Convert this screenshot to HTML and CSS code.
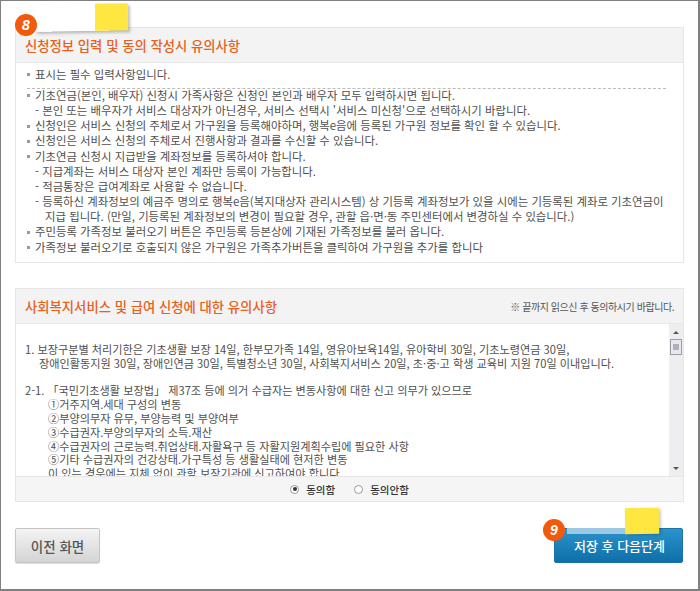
FILE: index.html
```html
<!DOCTYPE html>
<html lang="ko">
<head>
<meta charset="utf-8">
<title>유의사항</title>
<link rel="stylesheet" href="styles.css">
</head>
<body>
<div class="frame">
  <div class="tape tape-top"></div>
  <div class="badge badge-8">8</div>
  <section class="panel panel-first">
    <header class="panel-head"><h2>신청정보 입력 및 동의 작성시 유의사항</h2></header>
    <div class="notice">
      <p class="req">표시는 필수 입력사항입니다.</p>
      <ul class="list">
        <li>기초연금(본인, 배우자) 신청시 가족사항은 신청인 본인과 배우자 모두 입력하시면 됩니다.</li>
        <li class="sub">- 본인 또는 배우자가 서비스 대상자가 아닌경우, 서비스 선택시 '서비스 미신청'으로 선택하시기 바랍니다.</li>
        <li>신청인은 서비스 신청의 주체로서 가구원을 등록해야하며, 행복e음에 등록된 가구원 정보를 확인 할 수 있습니다.</li>
        <li>신청인은 서비스 신청의 주체로서 진행사항과 결과를 수신할 수 있습니다.</li>
        <li>기초연금 신청시 지급받을 계좌정보를 등록하셔야 합니다.</li>
        <li class="sub">- 지급계좌는 서비스 대상자 본인 계좌만 등록이 가능합니다.</li>
        <li class="sub">- 적금통장은 급여계좌로 사용할 수 없습니다.</li>
        <li class="sub wrap">- 등록하신 계좌정보의 예금주 명의로 행복e음(복지대상자 관리시스템) 상 기등록 계좌정보가 있을 시에는 기등록된 계좌로 기초연금이<br>지급 됩니다. (만일, 기등록된 계좌정보의 변경이 필요할 경우, 관할 읍·면·동 주민센터에서 변경하실 수 있습니다.)</li>
        <li>주민등록 가족정보 불러오기 버튼은 주민등록 등본상에 기재된 가족정보를 불러 옵니다.</li>
        <li>가족정보 불러오기로 호출되지 않은 가구원은 가족추가버튼을 클릭하여 가구원을 추가를 합니다</li>
      </ul>
    </div>
  </section>

  <section class="panel panel-second">
    <header class="panel-head split">
      <h2>사회복지서비스 및 급여 신청에 대한 유의사항</h2>
      <span class="hint">※ 끝까지 읽으신 후 동의하시기 바랍니다.</span>
    </header>
    <div class="scrollbox">
      <div class="terms">
        <p class="term">1. 보장구분별 처리기한은 기초생활 보장 14일, 한부모가족 14일, 영유아보육14일, 유아학비 30일, 기초노령연금 30일,<br><span class="cont">장애인활동지원 30일, 장애인연금 30일, 특별청소년 30일, 사회복지서비스 20일, 초·중·고 학생 교육비 지원 70일 이내입니다.</span></p>
        <p class="term">2-1. 「국민기초생활 보장법」 제37조 등에 의거 수급자는 변동사항에 대한 신고 의무가 있으므로</p>
        <ul class="circled">
          <li>①거주지역.세대 구성의 변동</li>
          <li>②부양의무자 유무, 부양능력 및 부양여부</li>
          <li>③수급권자.부양의무자의 소득.재산</li>
          <li>④수급권자의 근로능력.취업상태.자활욕구 등 자활지원계획수립에 필요한 사항</li>
          <li>⑤기타 수급권자의 건강상태.가구특성 등 생활실태에 현저한 변동</li>
          <li>이 있는 경우에는 지체 없이 관할 보장기관에 신고하여야 합니다.</li>
        </ul>
      </div>
      <div class="scrollbar">
        <svg class="arrow" viewBox="0 0 14 15" width="14" height="15"><path d="M7 7 L10 10 H4 Z" fill="#555"/></svg>
        <div class="thumb"><svg viewBox="0 0 8 7" width="8" height="7"><path d="M1 1H7M1 3H7M1 5H7" stroke="#778" stroke-width="1" fill="none"/></svg></div>
        <div class="track"></div>
        <svg class="arrow" viewBox="0 0 14 15" width="14" height="15"><path d="M4 6 H10 L7 9 Z" fill="#555"/></svg>
      </div>
    </div>
    <div class="consent">
      <label class="opt"><span class="radio on"></span>동의함</label>
      <label class="opt"><span class="radio"></span>동의안함</label>
    </div>
  </section>

  <div class="actions">
    <button class="btn btn-prev" type="button">이전 화면</button>
    <div class="next-wrap">
      <div class="strip"></div>
      <div class="tape tape-btn"></div>
      <div class="badge badge-9">9</div>
      <button class="btn btn-next" type="button">저장 후 다음단계</button>
    </div>
  </div>
</div>
</body>
</html>
```
FILE: styles.css
```css
* { box-sizing: border-box; }
html, body { margin: 0; padding: 0; }
body {
  width: 700px;
  height: 591px;
  overflow: hidden;
  background: #fff;
  font-family: "Noto Sans CJK KR", "Noto Sans", sans-serif;
  color: #4f4f4f;
}
.frame {
  position: relative;
  width: 700px;
  height: 591px;
  border: 1px solid #808080;
  border-width: 1px 2px 2px 1px;
  padding: 26px 14px 0 14px;
}
.panel {
  border: 1px solid #e6e6e6;
  width: 669px;
}
.panel-first { height: 236px; }
.panel-second { height: 214px; margin-top: 25px; display: flex; flex-direction: column; }
.panel-head {
  height: 35px;
  flex: none;
  background: #f3f3f3;
  border-bottom: 1px solid #e8e8e8;
  padding: 0 9px;
  display: flex;
  align-items: center;
}
.panel-head.split { justify-content: space-between; }
.panel-head h2 {
  margin: 0;
  font-size: 13.35px;
  font-weight: 500;
  color: #e8601c;
}
.hint { font-size: 10px; color: #555; letter-spacing: -0.45px; }
.notice { padding: 4px 0 0 11px; font-size: 11.4px; }
.notice p { margin: 0; }
.req {
  height: 22px;
  width: 639px;
  line-height: 15px;
  border-bottom: 1px dashed #bbb;
}
.req::before, .list > li:not(.sub)::before {
  content: "";
  display: inline-block;
  width: 3px;
  height: 3px;
  background: #999;
  margin: 0 5px 2px 0;
  vertical-align: middle;
}
.list {
  list-style: none;
  margin: -1px 0 0;
  padding: 0;
  line-height: 15.15px;
  white-space: nowrap;
}
.list .sub { padding-left: 8px; }
.list .wrap { padding-left: 18px; text-indent: -10px; }
.scrollbox { height: 152px; flex: none; display: flex; overflow: hidden; }
.terms {
  flex: 1;
  padding: 19px 0 0 9px;
  font-size: 11.15px;
  line-height: 13.8px;
  white-space: nowrap;
  overflow: hidden;
}
.term { margin: 0 0 13.8px; }
.cont { padding-left: 14px; }
.circled { list-style: none; margin: -13.8px 0 0; padding: 0 0 0 23px; }
.scrollbar { width: 14px; flex: none; display: flex; flex-direction: column; background: #eeeef0; }
.arrow { flex: none; display: block; }
.thumb {
  height: 16px;
  width: 12px;
  margin: 0 1px;
  background: #e6e8ee;
  border: 1px solid #9aa0a8;
  display: flex;
  align-items: center;
  justify-content: center;
}
.track { flex: 1; }
.consent {
  flex: 1;
  background: #f5f5f5;
  border-top: 1px solid #e6e6e6;
  display: flex;
  justify-content: center;
  align-items: center;
  gap: 19px;
  font-size: 10.5px;
  font-weight: 500;
  color: #333;
}
.opt { display: inline-flex; align-items: center; gap: 7px; }
.radio { width: 9px; height: 9px; border-radius: 50%; border: 1px solid #999; background: #fff; display: inline-block; position: relative; }
.radio.on::after { content: ""; position: absolute; left: 1.5px; top: 1.5px; width: 4px; height: 4px; border-radius: 50%; background: #333; }
.actions { display: flex; justify-content: space-between; margin-top: 26px; }
.btn { height: 35px; border-radius: 2px; font-family: inherit; font-weight: 500; padding: 0; }
.btn-prev {
  width: 85px;
  background: linear-gradient(#f4f4f4, #d4d4d6);
  border: 1px solid #c6c6c6;
  color: #555;
  font-size: 13.5px;
  box-shadow: 0 1px 1px #ddd;
}
.next-wrap { position: relative; margin-right: 1px; }
.btn-next {
  display: block;
  width: 129px;
  background: linear-gradient(#2c93cc, #0f6fa8);
  border: 1px solid #1a74a8;
  color: #fff;
  font-size: 13px;
  padding-left: 2px;
}
.strip {
  position: absolute;
  left: 13px;
  top: 0;
  width: 59px;
  height: 6px;
  background: #9cc9e4;
}
.badge {
  position: absolute;
  width: 22px;
  height: 22px;
  border-radius: 50%;
  background: #f15a0c;
  color: #fff;
  font: italic 700 14px/22px "Liberation Sans", sans-serif;
  text-align: center;
  z-index: 3;
}
.badge-8 { left: 14px; top: 13px; }
.badge-9 { left: -11px; top: -9px; }
.tape { position: absolute; z-index: 2; }
.tape-top {
  left: 34px;
  top: 3px;
  width: 93px;
  height: 27px;
  background: linear-gradient(90deg, #fff 60px, #ffe640 60px);
  transform: rotate(-1deg);
  box-shadow: 2px 2px 3px rgba(0,0,0,.25);
}
.tape-btn {
  left: 71px;
  top: -20px;
  width: 34px;
  height: 26px;
  background: #ffe640;
  transform: rotate(-1deg);
  box-shadow: 2px 1px 3px rgba(0,0,0,.2);
}
```
